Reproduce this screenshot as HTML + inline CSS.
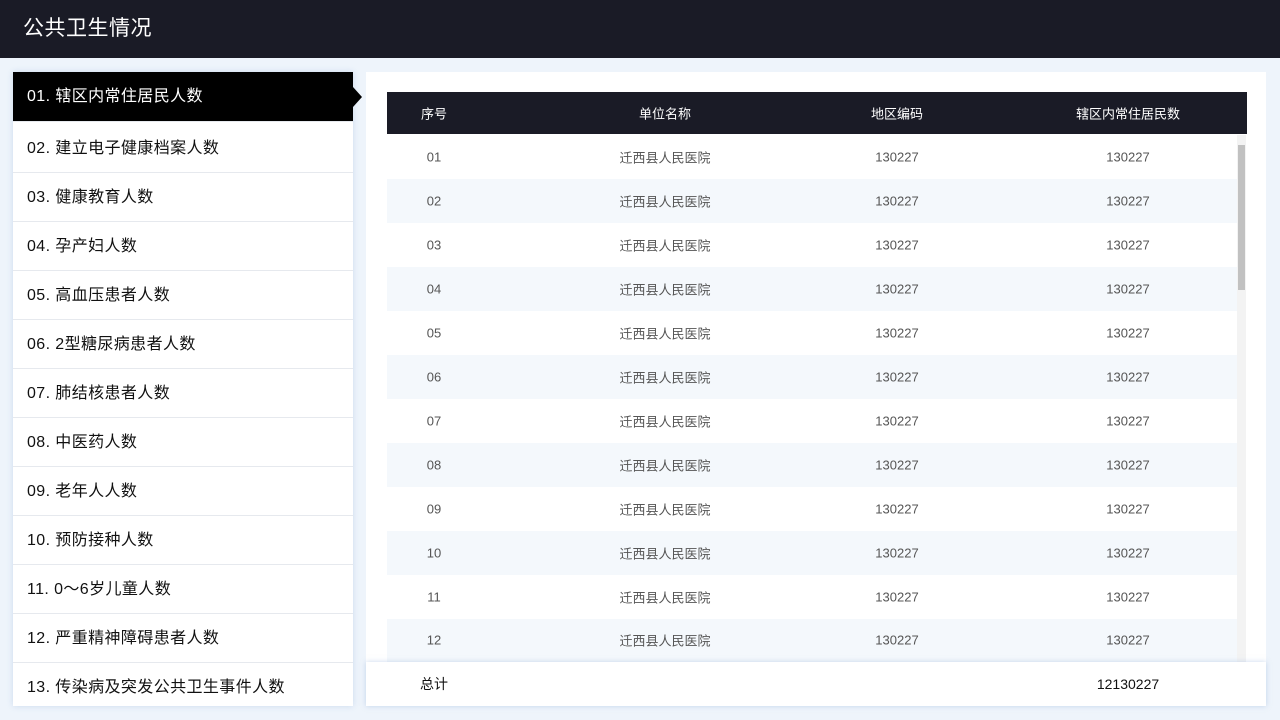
<!DOCTYPE html>
<html><head><meta charset="utf-8"><style>
*{margin:0;padding:0;box-sizing:border-box}
body{width:1280px;height:720px;overflow:hidden;background:#eef4fb;font-family:"Liberation Sans","Noto Sans CJK SC",sans-serif;position:relative}
.hd{position:absolute;left:0;top:0;width:1280px;height:58px;background:#1a1b26;color:#fff;font-size:21px;line-height:58px;padding-left:23px;letter-spacing:.5px}
.left{position:absolute;left:13px;top:72px;width:340px;height:634px;background:#fff;box-shadow:0 0 6px rgba(150,180,220,.4)}
.it{height:49px;line-height:49px;padding-left:14px;font-size:16px;color:#111;border-bottom:1px solid #e6e9ee;letter-spacing:.4px}
.it.a{background:#000;color:#fff;height:50px;line-height:50px;position:relative;margin-bottom:2px}
.it.a:after{content:"";position:absolute;right:-9px;top:15px;border-left:9px solid #000;border-top:10px solid transparent;border-bottom:10px solid transparent}
.right{position:absolute;left:366px;top:72px;width:900px;height:590px;background:#fff}
.th{position:absolute;left:387px;top:92px;width:860px;height:42px;background:#1a1b26;color:#fff;font-size:13px}
.row{position:absolute;left:387px;width:850px;height:44px;font-size:13px;color:#555}
.row.s{background:#f4f8fc}
.c{position:absolute;top:50%;transform:translate(-50%,-50%);white-space:nowrap}
.sb{position:absolute;left:1237px;top:135px;width:9px;height:527px;background:#f3f3f3}
.sb i{position:absolute;left:1px;top:10px;width:7px;height:145px;background:#c1c1c1}
.ft{position:absolute;left:366px;top:662px;width:900px;height:44px;background:#fff;box-shadow:0 0 5px rgba(150,180,220,.5);font-size:14px;color:#111}
</style></head><body>
<div class="hd">公共卫生情况</div>
<div class="left">
<div class="it a">01. 辖区内常住居民人数</div>
<div class="it">02. 建立电子健康档案人数</div>
<div class="it">03. 健康教育人数</div>
<div class="it">04. 孕产妇人数</div>
<div class="it">05. 高血压患者人数</div>
<div class="it">06. 2型糖尿病患者人数</div>
<div class="it">07. 肺结核患者人数</div>
<div class="it">08. 中医药人数</div>
<div class="it">09. 老年人人数</div>
<div class="it">10. 预防接种人数</div>
<div class="it">11. 0～6岁儿童人数</div>
<div class="it">12. 严重精神障碍患者人数</div>
<div class="it" style="border:none">13. 传染病及突发公共卫生事件人数</div>
</div>
<div class="right"></div>
<div class="th"><span class="c" style="left:47px">序号</span><span class="c" style="left:278px">单位名称</span><span class="c" style="left:510px">地区编码</span><span class="c" style="left:741px">辖区内常住居民数</span></div>
<div class="row" style="top:135px"><span class="c" style="left:47px">01</span><span class="c" style="left:278px">迁西县人民医院</span><span class="c" style="left:510px">130227</span><span class="c" style="left:741px">130227</span></div>
<div class="row s" style="top:179px"><span class="c" style="left:47px">02</span><span class="c" style="left:278px">迁西县人民医院</span><span class="c" style="left:510px">130227</span><span class="c" style="left:741px">130227</span></div>
<div class="row" style="top:223px"><span class="c" style="left:47px">03</span><span class="c" style="left:278px">迁西县人民医院</span><span class="c" style="left:510px">130227</span><span class="c" style="left:741px">130227</span></div>
<div class="row s" style="top:267px"><span class="c" style="left:47px">04</span><span class="c" style="left:278px">迁西县人民医院</span><span class="c" style="left:510px">130227</span><span class="c" style="left:741px">130227</span></div>
<div class="row" style="top:311px"><span class="c" style="left:47px">05</span><span class="c" style="left:278px">迁西县人民医院</span><span class="c" style="left:510px">130227</span><span class="c" style="left:741px">130227</span></div>
<div class="row s" style="top:355px"><span class="c" style="left:47px">06</span><span class="c" style="left:278px">迁西县人民医院</span><span class="c" style="left:510px">130227</span><span class="c" style="left:741px">130227</span></div>
<div class="row" style="top:399px"><span class="c" style="left:47px">07</span><span class="c" style="left:278px">迁西县人民医院</span><span class="c" style="left:510px">130227</span><span class="c" style="left:741px">130227</span></div>
<div class="row s" style="top:443px"><span class="c" style="left:47px">08</span><span class="c" style="left:278px">迁西县人民医院</span><span class="c" style="left:510px">130227</span><span class="c" style="left:741px">130227</span></div>
<div class="row" style="top:487px"><span class="c" style="left:47px">09</span><span class="c" style="left:278px">迁西县人民医院</span><span class="c" style="left:510px">130227</span><span class="c" style="left:741px">130227</span></div>
<div class="row s" style="top:531px"><span class="c" style="left:47px">10</span><span class="c" style="left:278px">迁西县人民医院</span><span class="c" style="left:510px">130227</span><span class="c" style="left:741px">130227</span></div>
<div class="row" style="top:575px"><span class="c" style="left:47px">11</span><span class="c" style="left:278px">迁西县人民医院</span><span class="c" style="left:510px">130227</span><span class="c" style="left:741px">130227</span></div>
<div class="row s" style="top:619px;height:43px"><span class="c" style="left:47px;top:21px">12</span><span class="c" style="left:278px;top:21px">迁西县人民医院</span><span class="c" style="left:510px;top:21px">130227</span><span class="c" style="left:741px;top:21px">130227</span></div>
<div class="sb"><i></i></div>
<div class="ft"><span class="c" style="left:68px">总计</span><span class="c" style="left:762px">12130227</span></div>
</body></html>
